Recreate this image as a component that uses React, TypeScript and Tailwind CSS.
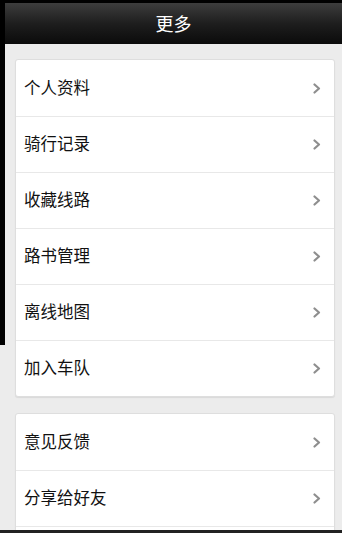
import React from "react";

const Chevron = () => (
  <svg width="8" height="11" viewBox="0 0 8 11" className="shrink-0">
    <polyline
      points="1.5,1.5 6,5.5 1.5,9.5"
      fill="none"
      stroke="#8e8e8e"
      strokeWidth="2.2"
      strokeLinecap="round"
      strokeLinejoin="round"
    />
  </svg>
);

const Row = ({ label, first }: { label: string; first?: boolean }) => (
  <div
    className={`h-[56px] flex items-center justify-between pl-[8px] pr-[13px] ${
      first ? "" : "border-t border-[#e8e8e8]"
    }`}
  >
    <span className="text-[16.5px] leading-none pb-[2px] text-[#111]">{label}</span>
    {label && <Chevron />}
  </div>
);

const Card = ({ items }: { items: string[] }) => (
  <div className="ml-[10px] mr-[7px] bg-white rounded-[3px] border border-[#dedede] shadow-[0_1px_1px_rgba(0,0,0,0.08)]">
    {items.map((label, i) => (
      <Row key={i} label={label} first={i === 0} />
    ))}
  </div>
);

export default function App() {
  return (
    <div
      className="h-[533px] w-full flex flex-col bg-[#ececec] overflow-hidden"
      style={{ fontFamily: '"Noto Sans CJK SC", "Noto Sans", sans-serif' }}
    >
      <div className="h-[3px] bg-black shrink-0" />
      <div className="flex-1 flex min-h-0 overflow-hidden">
        {/* left dark edge */}
        <div className="w-[5px] h-[342px] bg-black shrink-0" />
        <div className="flex-1 flex flex-col min-w-0">
          {/* Header */}
          <div className="h-[41px] shrink-0 flex items-center justify-center bg-gradient-to-b from-[#3d3d3d] via-[#1e1e1e] to-[#0b0b0b]">
            <span className="text-[18px] text-white">更多</span>
          </div>
          <div className="pt-[15px] flex flex-col gap-[16px]">
            <Card
              items={[
                "个人资料",
                "骑行记录",
                "收藏线路",
                "路书管理",
                "离线地图",
                "加入车队",
              ]}
            />
            <Card items={["意见反馈", "分享给好友", ""]} />
          </div>
        </div>
      </div>
      <div className="h-[3px] bg-[#222] shrink-0" />
    </div>
  );
}
